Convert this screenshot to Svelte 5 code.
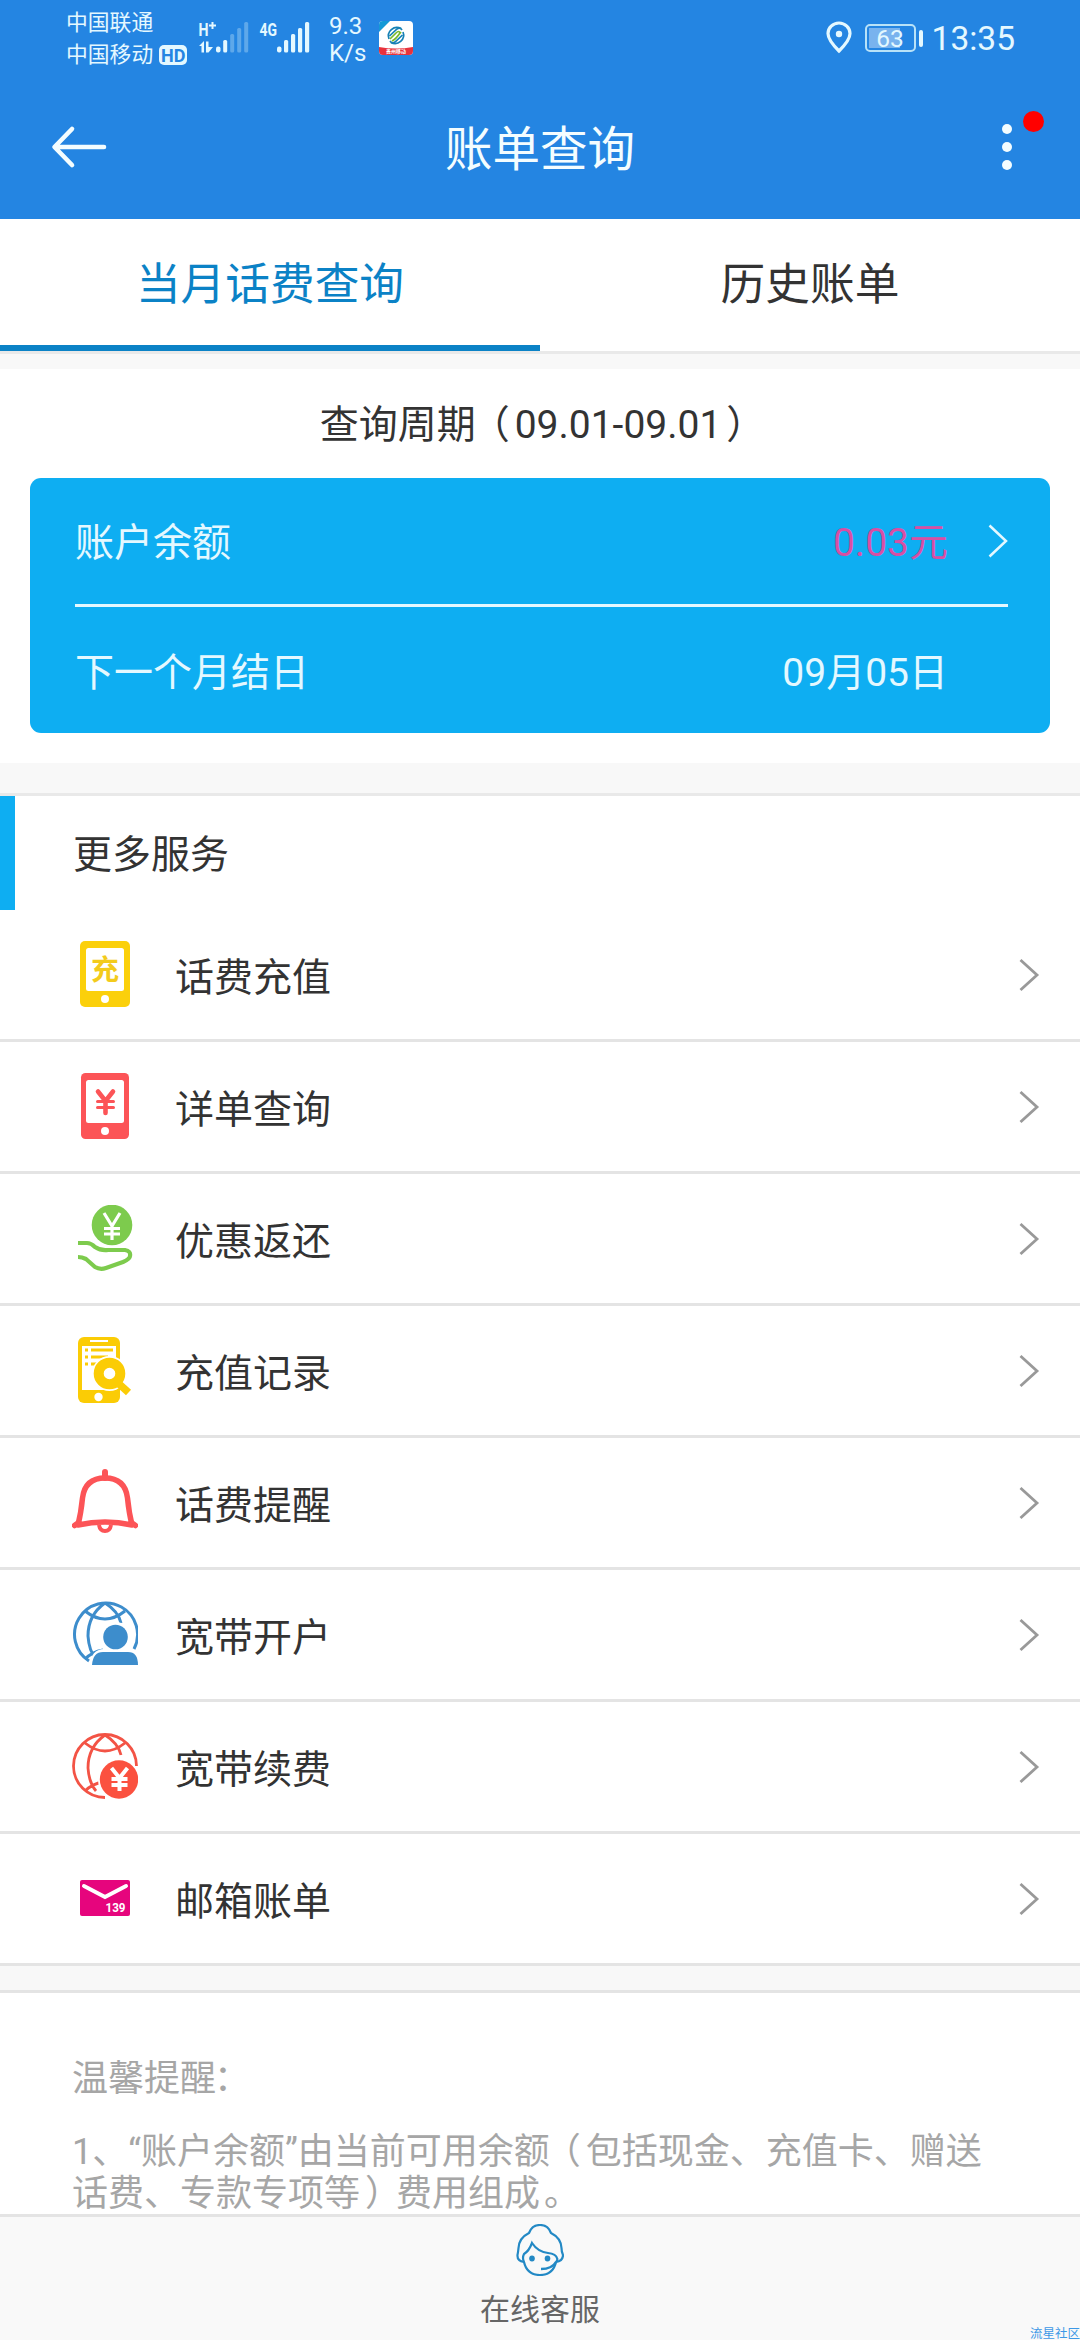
<script>
  const services = [
    { icon: 'recharge', label: '话费充值' },
    { icon: 'detail', label: '详单查询' },
    { icon: 'rebate', label: '优惠返还' },
    { icon: 'record', label: '充值记录' },
    { icon: 'bell', label: '话费提醒' },
    { icon: 'account', label: '宽带开户' },
    { icon: 'renew', label: '宽带续费' },
    { icon: 'mail', label: '邮箱账单' }
  ];
</script>

{#snippet yen()}
  <path d="M-8 -11 L0 -1 L8 -11 M0 -1 V12 M-8 0 H8 M-8 6 H8" />
{/snippet}

{#snippet globe()}
  <path d="M13 10 Q33 26 53 10 M33 2 Q16 14 16 35 Q17 50 24 58 M33 2 Q46 10 49 22 M13 58 Q20 51 31 49" />
{/snippet}

<div class="page">
  <header>
    <div class="status">
      <div class="carriers">
        <span>中国联通</span>
        <span>中国移动<b class="hd">HD</b></span>
      </div>
      <svg class="signals" width="120" height="40" viewBox="195 17 120 40">
        <g fill="#e4f8ff">
          <text x="198.500" y="35.500" class="net" textLength="10" lengthAdjust="spacingAndGlyphs">H</text>
          <path d="M212.500 22 V29 M209 25.500 H216" stroke="#e4f8ff" stroke-width="2" />
          <path d="M199 46 L204 41 V52.500 H201.500 V46 Z M206 41.500 H208.500 V47 H213 L208.500 52.500 H206 Z" />
          <rect x="216" y="46.500" width="4.500" height="6" rx="2" />
          <rect x="223.200" y="40" width="4" height="12.500" rx="1.500" />
          <g opacity=".3">
            <rect x="230.200" y="34" width="4" height="18.500" rx="1.500" />
            <rect x="237.200" y="28" width="4" height="24.500" rx="1.500" />
            <rect x="244.200" y="22" width="4" height="30.500" rx="1.500" />
          </g>
          <text x="259.500" y="35.500" class="net" textLength="17.500" lengthAdjust="spacingAndGlyphs">4G</text>
          <rect x="277" y="46.500" width="4.500" height="6" rx="2" />
          <rect x="284" y="40" width="4.200" height="12.500" rx="1.500" />
          <rect x="291" y="34" width="4.200" height="18.500" rx="1.500" />
          <rect x="298" y="28" width="4.200" height="24.500" rx="1.500" />
          <rect x="305" y="22" width="4.200" height="30.500" rx="1.500" />
        </g>
      </svg>
      <div class="speed"><span>9.3</span><span>K/s</span></div>
      <svg class="app" width="34" height="34" viewBox="0 0 34 34">
        <rect width="34" height="34" rx="4" fill="#fff" />
        <path d="M4 0 H11 L0 11 V4 Q0 0 4 0" fill="#1499d6" />
        <path d="M0 26 Q17 29 34 26 V30 Q34 34 30 34 H4 Q0 34 0 30 Z" fill="#e8323c" />
        <g fill="none" stroke="#1681b5" stroke-width="1.700">
          <path d="M10 18 A8.500 8.500 0 0 1 22 7.500 M24 11 A8.500 8.500 0 0 1 12 21.500" />
          <path d="M10.500 15 L18 8 Q21 6 23 9 M23.500 14 L16 21 Q13 23 11 20" />
          <path d="M11 18 L17 12 Q20 9 21 12 Q17 18 13 20 M17 17 L22 11" stroke="#79b92c" />
        </g>
        <text x="17" y="32.300" text-anchor="middle" class="tiny">贵州移动</text>
      </svg>
      <div class="right">
        <svg width="28" height="34" viewBox="0 0 28 34">
          <path d="M14 31 Q3 20 3 13.500 A11 10.500 0 0 1 25 13.500 Q25 20 14 31 Z" fill="none" stroke="#e4f8ff" stroke-width="3.200" />
          <circle cx="14" cy="14" r="3.200" fill="#e4f8ff" />
        </svg>
        <div class="battery"><span>63</span></div>
        <i class="cap"></i>
        <time>13:35</time>
      </div>
    </div>
    <nav>
      <svg class="back" width="60" height="44" viewBox="0 0 60 44">
        <path d="M22 4 L4.500 22 L22 40 M5 22 H54" fill="none" stroke="#f4fdff" stroke-width="4.600" stroke-linecap="round" stroke-linejoin="round" />
      </svg>
      <h1>账单查询</h1>
      <div class="more"><i></i><i></i><i></i><b class="alert"></b></div>
    </nav>
  </header>

  <div class="tabs">
    <div class="tab active">当月话费查询</div>
    <div class="tab">历史账单</div>
  </div>

  <section class="period">
    <h2>查询周期<span class="open">（</span>09.01-09.01<span class="close">）</span></h2>
    <div class="card">
      <div class="line first">
        <span>账户余额</span>
        <span class="money">0.03元</span>
        <svg width="22" height="36" viewBox="0 0 22 36"><path d="M3.500 2.500 L20 18 L3.500 33.500" fill="none" stroke="#e4f8ff" stroke-width="2.500" /></svg>
      </div>
      <div class="line"><span>下一个月结日</span><span class="date">09月05日</span></div>
    </div>
  </section>

  <section class="services">
    <h3>更多服务</h3>
    {#each services as s}
      <div class="row">
        <svg class="icon" width="66" height="66" viewBox="0 0 66 66">
          {#if s.icon === 'recharge'}
            <rect x="8" y="0" width="50" height="66" rx="5" fill="#fbd00b" />
            <rect x="14" y="7" width="38" height="43" rx="2.500" fill="#fff" />
            <circle cx="33" cy="58" r="4" fill="#fff" />
            <text x="33" y="39" text-anchor="middle" class="chong">充</text>
          {:else if s.icon === 'detail'}
            <rect x="9" y="0" width="48" height="66" rx="4.500" fill="#fc5457" />
            <rect x="14" y="7" width="38" height="43" rx="2.500" fill="#fff" />
            <circle cx="33" cy="58" r="4" fill="#fff" />
            <g transform="translate(33.500 29)" fill="none" stroke="#fc5457" stroke-width="4.600" stroke-linecap="round">
              <path d="M-7.500 -10.500 L0 -1 L7.500 -10.500 M0 -1 V11" />
              <path d="M-8 -0.500 H8 M-8 5.500 H8" stroke-width="3" />
            </g>
          {:else if s.icon === 'rebate'}
            <circle cx="40" cy="20" r="20.300" fill="#7dcb4d" />
            <g transform="translate(40 20)" fill="none" stroke="#fff" stroke-width="3.200">
              <path d="M-8 -12 L0 1 L8 -12 M0 0 V15 M-8 3.500 H8 M-8 9 H8" />
            </g>
            <path d="M6 38 H15 Q19 38 23 42 Q29 46 36 45 L53 45 Q59 46 58 51 Q58 54 51 57 L34 63 Q28 65 23 62 L14 54 Q10 52 6 52" fill="none" stroke="#7dcb4d" stroke-width="4.200" stroke-linejoin="round" />
          {:else if s.icon === 'record'}
            <rect x="6" y="0" width="42" height="66" rx="6" fill="#fbcc05" />
            <path d="M18 4 H36" stroke="#fff" stroke-width="2" />
            <path d="M10 9 H44 V53 H10 Z" fill="#fff" />
            <path d="M13 13 H16 M19 13 H41 M13 20 H16 M19 20 H36 M13 27 H16 M19 27 H28" stroke="#fbcc05" stroke-width="3" />
            <circle cx="37.500" cy="36.500" r="17.500" fill="#fff" />
            <circle cx="37.500" cy="36.500" r="10.800" fill="none" stroke="#fbcc05" stroke-width="10" />
            <path d="M46 46 L56.500 55.500" stroke="#fbcc05" stroke-width="7.500" />
            <circle cx="26.500" cy="60" r="4.200" fill="#fff" />
          {:else if s.icon === 'bell'}
            <g fill="none" stroke="#fc5457" stroke-width="5.500" stroke-linejoin="round">
              <path d="M33 3 V9" stroke-width="6" stroke-linecap="round" />
              <path d="M6 56 Q9 44 10.500 29 Q13 9 33 9 Q53 9 55.500 29 Q57 44 60 56 Q33 50 6 56 Z" />
              <path d="M2.500 56.500 L6 54 M63.500 56.500 L60 54" stroke-linecap="round" />
              <path d="M27 56 Q28 62 33 62 Q38 62 39 56" stroke-width="4" />
            </g>
          {:else if s.icon === 'account'}
            <g fill="none" stroke="#3d8dcc" stroke-width="3">
              <path d="M17 60 A31.500 31.500 0 1 1 62 48" />
              {@render globe()}
            </g>
            <circle cx="43.500" cy="36" r="15" fill="#fff" />
            <path d="M17 66 Q19 48 32 48 H55 Q66 48 66 66 Z" fill="#fff" />
            <circle cx="43.500" cy="36" r="12.300" fill="#3d8dcc" />
            <path d="M20 64 Q21 51 31 51 H56 Q66 51 66 64 Z" fill="#3d8dcc" />
          {:else if s.icon === 'renew'}
            <g fill="none" stroke="#f35345" stroke-width="2.800">
              <path d="M33 64.500 A31.500 31.500 0 1 1 64.500 33" />
              {@render globe()}
            </g>
            <circle cx="47" cy="46.500" r="21" fill="#fff" />
            <circle cx="47" cy="46.500" r="19.200" fill="#fb513f" />
            <g transform="translate(47.500 46)" fill="none" stroke="#fff" stroke-width="4">{@render yen()}</g>
          {:else}
            <rect x="8" y="15" width="50" height="36" rx="2" fill="#e6057d" />
            <path d="M12 21 L33 32 L54 21" fill="none" stroke="#fff" stroke-width="4" stroke-linecap="round" />
            <text x="33.500" y="46.500" class="n139" textLength="20" lengthAdjust="spacingAndGlyphs">139</text>
          {/if}
        </svg>
        <span class="label">{s.label}</span>
        <svg class="chev" width="22" height="36" viewBox="0 0 22 36"><path d="M2.500 3 L19 18 L2.500 33" fill="none" stroke="#999" stroke-width="2.800" /></svg>
      </div>
    {/each}
  </section>

  <section class="tips">
    <p class="head">温馨提醒<span class="colon">：</span></p>
    <p>1、“账户余额”由当前可用余额<span class="open">（</span>包括现金、充值卡、赠送<br />话费、专款专项等<span class="close">）</span>费用组成<span class="stop">。</span></p>
  </section>

  <footer>
    <svg width="48" height="52" viewBox="0 0 48 52" fill="none" stroke="#2389c5" stroke-width="2.200">
      <path d="M8 38 Q1 37 1.500 31 Q2 29 2.500 24 Q3 14 13 9 Q16 1 24 1 Q32 1 35 9 Q45 14 45.500 24 Q45.500 28 47 31 Q47 37 40 38" />
      <path d="M8 38 Q6 34 8 30 Q13 27 16 19 Q22 28 32 29 Q40 30 41 34 Q42 36 40 38 Q37 51 24 51 Q11 51 8 38 Z" />
      <path d="M40 38 Q36 45 25 45" stroke-width="2.500" />
      <ellipse cx="16" cy="34.500" rx="2.800" ry="3" fill="#2389c5" stroke="none" />
      <ellipse cx="31.500" cy="34.500" rx="2.800" ry="3" fill="#2389c5" stroke="none" />
    </svg>
    <span>在线客服</span>
    <small>流星社区</small>
  </footer>
</div>

<style>
  :global(body) { margin: 0; background: #f8f8f8; }
  .page {
    width: 1080px; height: 2340px; overflow: hidden; display: flex; flex-direction: column;
    background: #f8f8f8; color: #333;
    font-family: Roboto, "Noto Sans CJK SC", sans-serif; font-size: 39px; line-height: 1;
  }
  h1, h2, h3, p { margin: 0; font-weight: 400; }
  svg { display: block; flex: none; }
  header { height: 219px; flex: none; background: #2485e2; color: #e4f8ff; }
  .status { height: 75px; display: flex; align-items: flex-start; padding-left: 66px; }
  .carriers { width: 129px; padding-top: 7px; font-size: 21.8px; line-height: 32px; display: flex; flex-direction: column; }
  .carriers span { display: flex; align-items: center; white-space: nowrap; }
  .hd { margin-left: 6px; width: 28px; height: 20px; border-radius: 5px; background: #e4f8ff; color: #2485e2; font-size: 18px; line-height: 21px; text-align: center; font-weight: 700; }
  .signals { margin-top: 17px; }
  .net { font: 700 18px Roboto, sans-serif; }
  .speed { margin-left: 14px; padding-top: 13px; width: 50px; font-size: 24px; line-height: 27px; display: flex; flex-direction: column; }
  .app { margin-top: 21px; }
  .tiny { font: 700 5px "Noto Sans CJK SC", sans-serif; fill: #fff; }
  .right { margin-left: auto; padding: 20px 65px 0 0; display: flex; align-items: flex-start; }
  .battery { margin: 4px 0 0 12px; width: 51px; height: 28px; box-sizing: border-box; border: 2px solid #b8e2f8; border-radius: 5px; font-size: 24.5px; line-height: 25px; text-align: center; background: linear-gradient(#79b3ee, #79b3ee) 2px 2px / 31px 20px no-repeat; }
  .cap { width: 4px; height: 17px; margin: 10px 9px 0 3px; border-radius: 2px; background: #e4f8ff; }
  time { font-size: 33.5px; line-height: 38px; }
  nav { height: 144px; display: flex; align-items: center; justify-content: space-between; padding: 0 36px 0 50px; color: #f4fdff; }
  .back { width: 60px; }
  h1 { font-size: 47.5px; padding-right: 14px; padding-top: 7px; }
  .more { position: relative; width: 60px; height: 46px; display: flex; flex-direction: column; justify-content: space-between; align-items: center; }
  .more i { width: 10px; height: 10px; border-radius: 50%; background: #f4fdff; transform: translateX(-7px); }
  .alert { position: absolute; left: 39px; top: -13px; width: 21px; height: 21px; border-radius: 50%; background: #f00; }
  .tabs { height: 132px; flex: none; display: flex; background: #fff; border-bottom: 3px solid #e9e9e9; font-size: 44.7px; }
  .tab { flex: 1; display: flex; align-items: center; justify-content: center; border-bottom: 6px solid transparent; box-sizing: border-box; padding-top: 6px; }
  .tab.active { color: #0b82c6; border-bottom-color: #0b82c6; }
  .period { margin-top: 15px; height: 394px; flex: none; box-sizing: border-box; padding: 0 30px; background: #fff; }
  h2 { height: 109px; font-size: 39px; line-height: 112px; text-align: center; }
  .open { margin: 0 5px 0 -5px; }
  .close { margin: 0 -5px 0 5px; }
  .colon { margin-left: -2px; }
  .stop { margin-left: 4px; }
  .card { height: 255px; box-sizing: border-box; padding: 0 42px 0 45px; border-radius: 11px; background: #0eaef2; color: #e4f8ff; }
  .line { height: 127px; display: flex; align-items: center; }
  .line.first { height: 126px; border-bottom: 3px solid #e4f8ff; }
  .line span { padding-top: 5px; }
  .line span:first-child { margin-right: auto; }
  .money { color: #d84fa4; margin-right: 38px; }
  .date { margin-right: 60px; }
  .services { flex: none; margin-top: 30px; border-top: 3px solid #e9e9e9; background: #fff; }
  h3 { height: 114px; box-sizing: border-box; border-left: 15px solid #0eaef2; padding-left: 58px; font-size: 39px; line-height: 119px; }
  .row { height: 129px; display: flex; align-items: center; padding: 0 40px 0 72px; border-bottom: 3px solid #e4e4e4; }
  .icon { margin-top: -1px; }
  .label { margin-left: 37px; margin-right: auto; padding-top: 7px; }
  .chong { font: 700 28px "Noto Sans CJK SC", sans-serif; fill: #f3cb1c; }
  .n139 { font: 700 13px Roboto, sans-serif; fill: #fff; }
  .tips { margin-top: 24px; height: 221px; flex: none; overflow: hidden; border-top: 3px solid #e4e4e4; padding: 0 72px; background: #fff; color: #a6a6a6; font-size: 36px; line-height: 42px; white-space: nowrap; }
  .tips .head { padding: 65px 0 31px; }
  footer { position: relative; flex: 1; border-top: 3px solid #e4e4e4; display: flex; flex-direction: column; align-items: center; padding-top: 7px; color: #666; font-size: 30px; background: #f9f9f9; }
  footer span { margin-top: 19px; }
  small { position: absolute; right: 0; bottom: 0; font-size: 12.5px; line-height: 13px; color: #3d98e6; }
</style>
